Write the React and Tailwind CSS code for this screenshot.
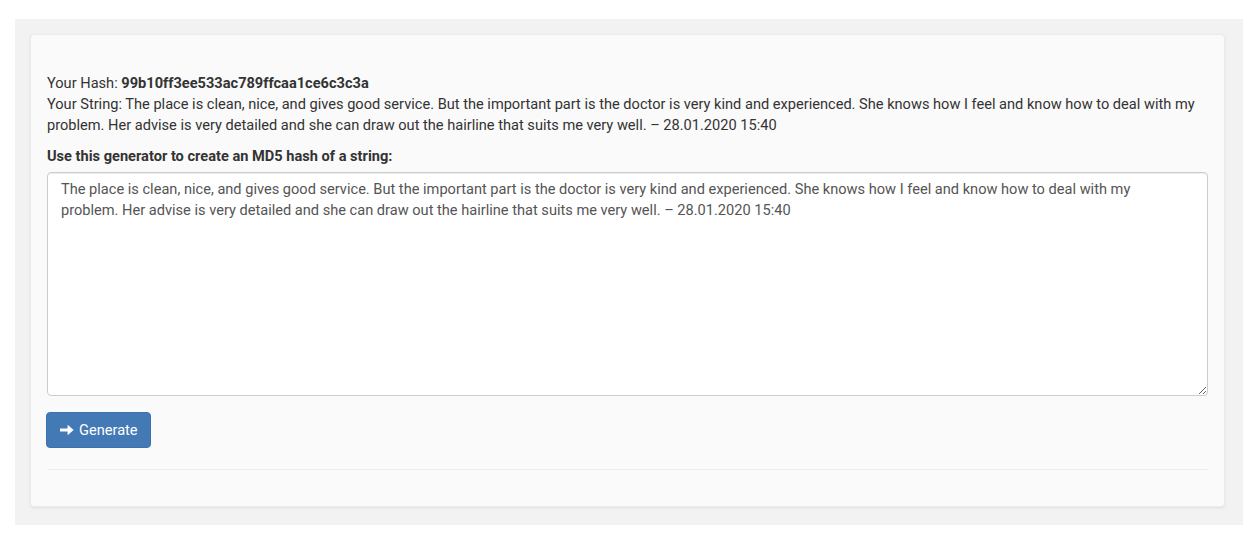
import React from "react";

const text =
  "The place is clean, nice, and gives good service. But the important part is the doctor is very kind and experienced. She knows how I feel and know how to deal with my problem. Her advise is very detailed and she can draw out the hairline that suits me very well. – 28.01.2020 15:40";

export default function App() {
  return (
    <div className="min-h-screen bg-white pt-[19px] pl-[15px] font-['Roboto',sans-serif] text-[14.6px] leading-[21px] text-[#333]">
      <div className="w-[1228px] bg-[#f2f2f2] pt-[15px] pl-[15px] pr-[18px] pb-[18px]">
        <div className="rounded-[4px] border border-[#ebebeb] bg-[#fafafa] px-[16px] pt-[38px] pb-[36px] shadow-[0_1px_3px_rgba(0,0,0,0.08)]">
          <p>
            Your Hash: <b className="font-bold">99b10ff3ee533ac789ffcaa1ce6c3c3a</b>
            <br />
            Your String: {text}
          </p>
          <label className="mt-[10px] block font-bold">
            Use this generator to create an MD5 hash of a string:
          </label>
          <textarea
            defaultValue={text}
            className="mt-[5px] block h-[224px] w-full resize-y rounded-[4px] border border-[#ccc] bg-white pl-[13px] pr-[40px] py-[6px] text-[14.6px] leading-[21px] text-[#555] shadow-[inset_0_1px_1px_rgba(0,0,0,0.075)] outline-none"
          />
          <button className="mt-[16px] -ml-px flex h-[36px] items-center gap-[5px] rounded-[4px] border border-[#3f72aa] bg-[#4379b4] pl-[13px] pr-[12px] text-[14.6px] text-white">
            <svg width="14" height="12" viewBox="0 0 14 12" fill="white">
              <path d="M0 4.4h7.6V0.8L13.6 6 7.6 11.2V7.6H0z" />
            </svg>
            Generate
          </button>
          <hr className="mt-[21px] border-t border-[#eee]" />
        </div>
      </div>
    </div>
  );
}
